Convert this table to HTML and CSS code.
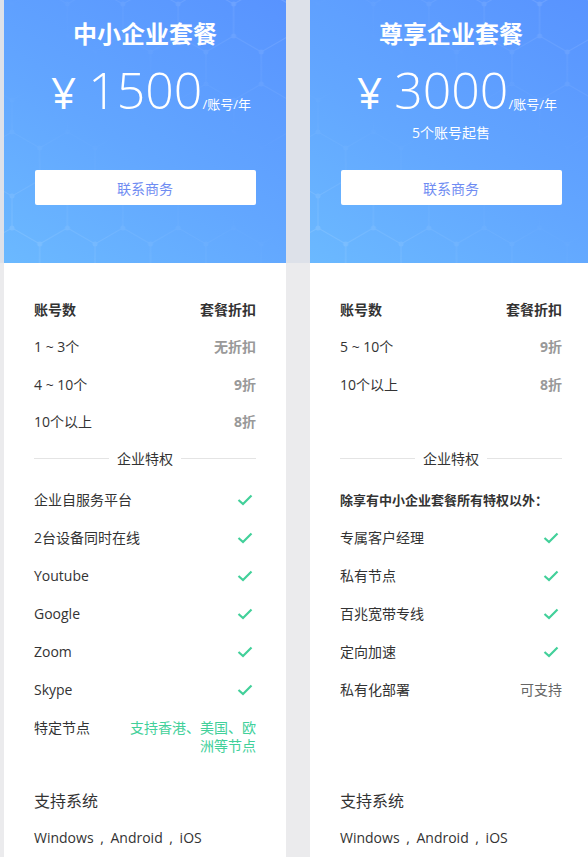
FILE: index.html
```html
<!DOCTYPE html>
<html lang="zh-CN">
<head>
  <meta charset="UTF-8">
  <title>企业套餐</title>
  <link rel="stylesheet" href="styles.css">
</head>
<body>
  <svg class="defs" width="0" height="0">
    <defs>
      <pattern id="hex" width="55.4" height="96" patternUnits="userSpaceOnUse" x="8" y="-12">
        <path d="M27.7 0 L55.4 16 L55.4 48 L27.7 64 L0 48 L0 16 Z M27.7 64 L27.7 96" fill="none" stroke="#fff" stroke-width="1"/>
        <circle cx="27.7" cy="0" r="2.5" fill="#fff"/>
        <circle cx="0" cy="16" r="2.5" fill="#fff"/>
        <circle cx="55.4" cy="16" r="2.5" fill="#fff"/>
        <circle cx="0" cy="48" r="2.5" fill="#fff"/>
        <circle cx="55.4" cy="48" r="2.5" fill="#fff"/>
        <circle cx="27.7" cy="64" r="2.5" fill="#fff"/>
        <circle cx="27.7" cy="96" r="2.5" fill="#fff"/>
      </pattern>
    </defs>
  </svg>

  <div class="page">
    <div class="card">
      <div class="card-head">
        <svg class="hex-bg"><rect width="100%" height="100%" fill="url(#hex)"/></svg>
        <h2 class="plan-name">中小企业套餐</h2>
        <div class="price"><span class="yen">¥</span><span class="amount">1500</span><span class="unit">/账号/年</span></div>
        <p class="sub"></p>
        <button class="contact">联系商务</button>
      </div>
      <div class="card-body">
        <div class="tiers">
          <div class="row row-head"><span>账号数</span><span>套餐折扣</span></div>
          <div class="row"><span>1 ~ 3个</span><span class="off">无折扣</span></div>
          <div class="row"><span>4 ~ 10个</span><span class="off">9折</span></div>
          <div class="row"><span>10个以上</span><span class="off">8折</span></div>
        </div>
        <div class="divider"><span>企业特权</span></div>
        <ul class="perks">
          <li><span>企业自服务平台</span><svg class="check" viewBox="0 0 16 12"><path d="M1.5 6 L6 10 L14.5 1.5"/></svg></li>
          <li><span>2台设备同时在线</span><svg class="check" viewBox="0 0 16 12"><path d="M1.5 6 L6 10 L14.5 1.5"/></svg></li>
          <li><span>Youtube</span><svg class="check" viewBox="0 0 16 12"><path d="M1.5 6 L6 10 L14.5 1.5"/></svg></li>
          <li><span>Google</span><svg class="check" viewBox="0 0 16 12"><path d="M1.5 6 L6 10 L14.5 1.5"/></svg></li>
          <li><span>Zoom</span><svg class="check" viewBox="0 0 16 12"><path d="M1.5 6 L6 10 L14.5 1.5"/></svg></li>
          <li><span>Skype</span><svg class="check" viewBox="0 0 16 12"><path d="M1.5 6 L6 10 L14.5 1.5"/></svg></li>
          <li><span>特定节点</span><span class="green">支持香港、美国、欧洲等节点</span></li>
        </ul>
        <div class="systems">
          <h3>支持系统</h3>
          <p>Windows , Android , iOS</p>
        </div>
      </div>
    </div>

    <div class="card">
      <div class="card-head">
        <svg class="hex-bg"><rect width="100%" height="100%" fill="url(#hex)"/></svg>
        <h2 class="plan-name">尊享企业套餐</h2>
        <div class="price"><span class="yen">¥</span><span class="amount">3000</span><span class="unit">/账号/年</span></div>
        <p class="sub">5个账号起售</p>
        <button class="contact">联系商务</button>
      </div>
      <div class="card-body">
        <div class="tiers">
          <div class="row row-head"><span>账号数</span><span>套餐折扣</span></div>
          <div class="row"><span>5 ~ 10个</span><span class="off">9折</span></div>
          <div class="row"><span>10个以上</span><span class="off">8折</span></div>
        </div>
        <div class="divider"><span>企业特权</span></div>
        <ul class="perks">
          <li class="lead">除享有中小企业套餐所有特权以外：</li>
          <li><span>专属客户经理</span><svg class="check" viewBox="0 0 16 12"><path d="M1.5 6 L6 10 L14.5 1.5"/></svg></li>
          <li><span>私有节点</span><svg class="check" viewBox="0 0 16 12"><path d="M1.5 6 L6 10 L14.5 1.5"/></svg></li>
          <li><span>百兆宽带专线</span><svg class="check" viewBox="0 0 16 12"><path d="M1.5 6 L6 10 L14.5 1.5"/></svg></li>
          <li><span>定向加速</span><svg class="check" viewBox="0 0 16 12"><path d="M1.5 6 L6 10 L14.5 1.5"/></svg></li>
          <li><span>私有化部署</span><span class="muted">可支持</span></li>
        </ul>
        <div class="systems">
          <h3>支持系统</h3>
          <p>Windows , Android , iOS</p>
        </div>
      </div>
    </div>
  </div>
</body>
</html>
```

FILE: styles.css
```css
html, body {
  overflow: hidden;
}
body {
  margin: 0;
  padding-left: 4px;
  background: #ebebed linear-gradient(#dde1e9, #dde1e9) no-repeat;
  background-size: 100% 263px;
  color: #333;
  font-family: "Open Sans", "Noto Sans CJK SC", sans-serif;
  font-size: 14px;
}
.defs {
  position: absolute;
}
.page {
  display: flex;
  gap: 24px;
  width: 600px;
}
.card {
  flex: 0 0 282px;
}
.card-head {
  position: relative;
  height: 263px;
  box-sizing: border-box;
  padding-top: 17px;
  overflow: hidden;
  text-align: center;
  color: #fff;
  background: linear-gradient(210deg, #5893ff 0%, #62a6ff 55%, #6bb9ff 100%);
}
.hex-bg {
  position: absolute;
  left: 0;
  top: 0;
  width: 100%;
  height: 100%;
  opacity: 0.14;
  -webkit-mask-image: linear-gradient(210deg, #000 0%, transparent 40%, transparent 55%, #000 100%);
  mask-image: linear-gradient(210deg, #000 0%, transparent 40%, transparent 55%, #000 100%);
}
.plan-name, .price, .sub, .contact {
  position: relative;
}
.plan-name {
  margin: 0;
  font-size: 24px;
  line-height: 34px;
  font-weight: 700;
}
.price {
  margin-top: 11px;
  height: 56px;
  display: flex;
  justify-content: center;
  align-items: baseline;
  padding-left: 12px;
}
.yen {
  font-size: 44px;
  font-weight: 400;
  margin-right: 12px;
}
.amount {
  font-size: 50px;
  line-height: 56px;
  font-weight: 300;
}
.unit {
  font-size: 13px;
}
.sub {
  margin: 5px 0 0;
  height: 20px;
  line-height: 20px;
  font-size: 14px;
}
.contact {
  display: block;
  margin: 27px auto 0;
  width: 221px;
  height: 35px;
  border: none;
  border-radius: 2px;
  background: #fff;
  color: #6f8cf2;
  font-family: inherit;
  font-size: 14px;
}
.card-body {
  background: #fff;
  padding: 27px 30px 40px;
  min-height: 620px;
}
.tiers {
  min-height: 150px;
}
.row {
  display: flex;
  justify-content: space-between;
  align-items: center;
  height: 37.5px;
}
.row-head span {
  font-weight: 700;
}
.off {
  font-weight: 700;
  color: #999;
}
.divider {
  margin-top: 8px;
  height: 20px;
  display: flex;
  align-items: center;
  gap: 8px;
}
.divider::before, .divider::after {
  content: "";
  flex: 1;
  height: 1px;
  background: #e4e4e4;
}
.perks {
  list-style: none;
  margin: 13px 0 0;
  padding: 0;
  min-height: 284px;
}
.perks li {
  display: flex;
  justify-content: space-between;
  align-items: flex-start;
  padding: 10px 0;
  line-height: 18px;
}
.perks .lead {
  font-weight: 700;
  font-size: 13px;
}
.check {
  width: 16px;
  height: 12px;
  margin: 3px 3px 0 0;
  fill: none;
  stroke: #42d09a;
  stroke-width: 2.2;
}
.green {
  max-width: 130px;
  text-align: right;
  color: #42d09a;
}
.muted {
  color: #666;
}
.systems h3 {
  margin: 25px 0 0;
  font-size: 16px;
  font-weight: 400;
  line-height: 22px;
}
.systems p {
  margin: 15px 0 0;
  line-height: 22px;
  word-spacing: 3px;
}
```
